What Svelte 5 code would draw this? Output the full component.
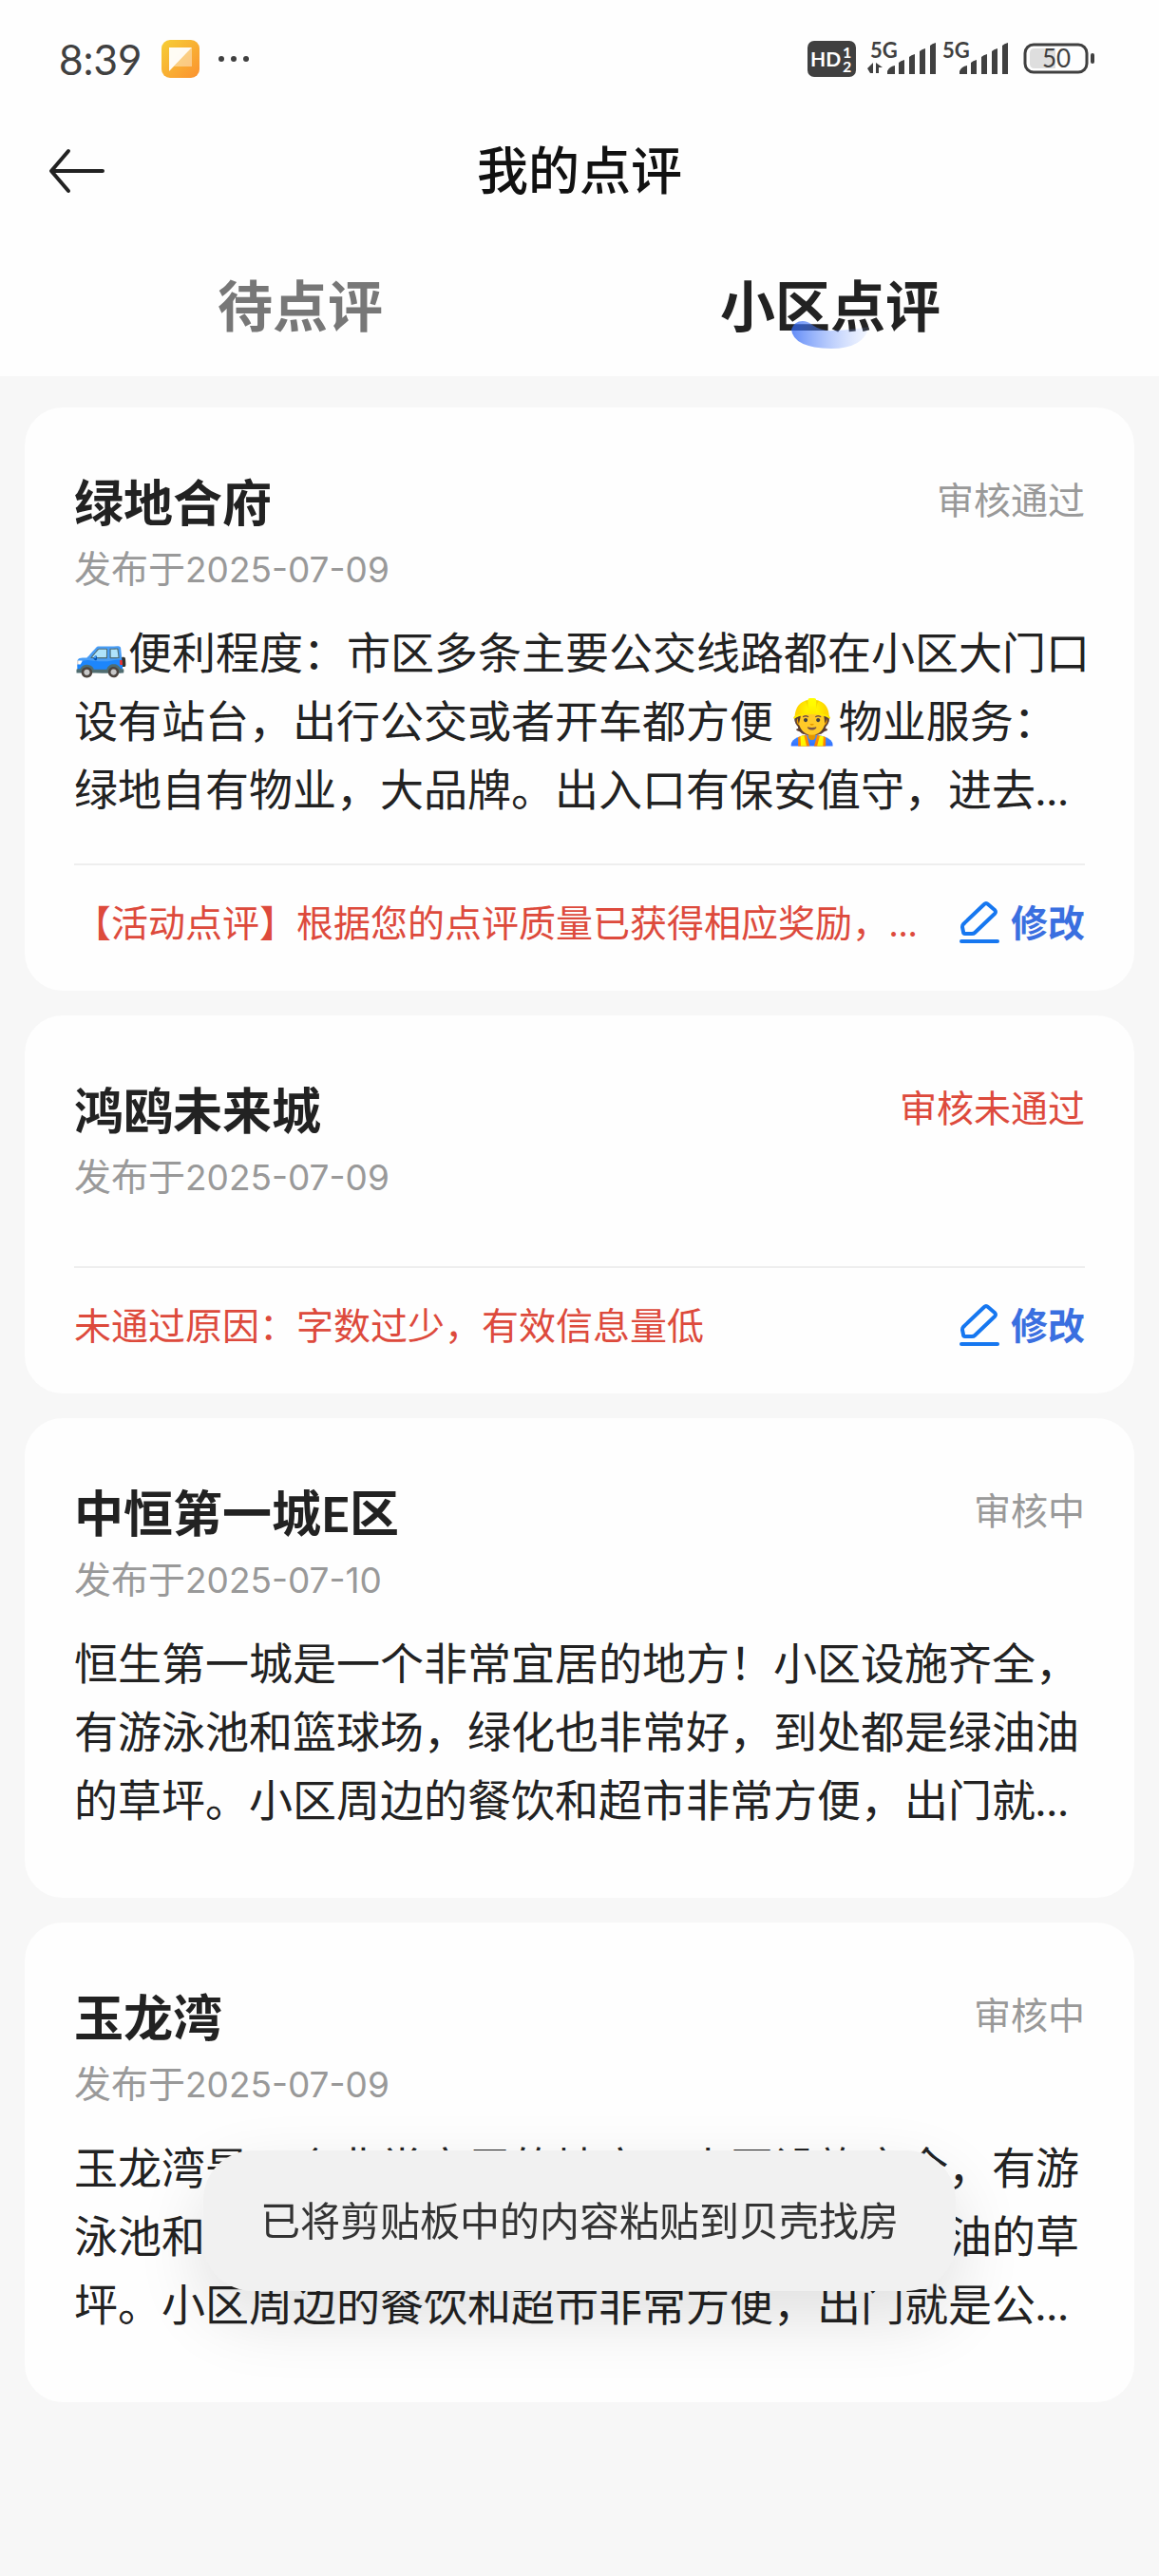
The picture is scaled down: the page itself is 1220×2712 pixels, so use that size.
<script>
  let activeTab = "community";

  const tabs = [
    { id: "pending", label: "待点评" },
    { id: "community", label: "小区点评" }
  ];

  const reviews = [
    {
      name: "绿地合府",
      date: "2025-07-09",
      status: "审核通过",
      text:
        "🚙便利程度：市区多条主要公交线路都在小区大门口\n设有站台，出行公交或者开车都方便 👷物业服务：\n绿地自有物业，大品牌。出入口有保安值守，进去…",
      note: "【活动点评】根据您的点评质量已获得相应奖励，…"
    },
    {
      name: "鸿鸥未来城",
      date: "2025-07-09",
      status: "审核未通过",
      rejected: true,
      text: "",
      note: "未通过原因：字数过少，有效信息量低"
    },
    {
      name: "中恒第一城E区",
      date: "2025-07-10",
      status: "审核中",
      text:
        "恒生第一城是一个非常宜居的地方！小区设施齐全，\n有游泳池和篮球场，绿化也非常好，到处都是绿油油\n的草坪。小区周边的餐饮和超市非常方便，出门就…"
    },
    {
      name: "玉龙湾",
      date: "2025-07-09",
      status: "审核中",
      text:
        "玉龙湾是一个非常宜居的地方，小区设施齐全，有游\n泳池和篮球场，绿化也非常好，到处都是绿油油的草\n坪。小区周边的餐饮和超市非常方便，出门就是公…"
    }
  ];
</script>

<style>
  :global(body) {
    background: #f7f7f7;
  }
  .page {
    font-family: Lato, "Noto Sans CJK SC", sans-serif;
    color: #222;
    min-height: 100vh;
  }
  button {
    font-family: inherit;
    border: 0;
    padding: 0;
    background: none;
    cursor: pointer;
  }
  svg {
    display: block;
  }
  header {
    background: #fefefe;
  }
  .statusbar {
    display: flex;
    justify-content: space-between;
    align-items: center;
    height: 124px;
    padding: 0 67px 0 62px;
    color: #404040;
  }
  .statusbar div {
    display: flex;
    align-items: center;
  }
  .left {
    gap: 20px;
  }
  .right {
    gap: 12px;
  }
  .time {
    font-size: 44px;
    line-height: 60px;
  }
  .navbar {
    display: grid;
    grid-template-columns: 120px 1fr 120px;
    align-items: center;
    height: 112px;
  }
  .back {
    padding-left: 50px;
  }
  h1 {
    margin: 0;
    color: #111;
    font-size: 54px;
    line-height: 72px;
    font-weight: 500;
    text-align: center;
  }
  .tabs {
    display: grid;
    grid-template-columns: 1fr 1fr;
    height: 160px;
    padding: 0 67px 0 37px;
  }
  .tab {
    position: relative;
    color: #777;
    font-size: 58px;
    line-height: 80px;
    font-weight: 700;
    padding-top: 12px;
  }
  .tab.active {
    color: #222;
  }
  .tab svg {
    position: absolute;
    left: 50%;
    top: 50%;
    transform: translate(-50%, 22px);
  }
  main {
    display: flex;
    flex-direction: column;
    gap: 26px;
    padding: 33px 26px;
  }
  .card {
    background: #fefefe;
    border-radius: 40px;
    padding: 70px 52px 0;
  }
  .head {
    display: flex;
    justify-content: space-between;
    align-items: flex-start;
  }
  h2 {
    margin: 0;
    font-size: 52px;
    line-height: 60px;
    font-weight: 700;
  }
  .state,
  .date,
  .note,
  .edit {
    font-size: 39px;
    line-height: 54px;
  }
  .state,
  .date {
    color: #999;
  }
  .date {
    margin: 12px 0 0;
  }
  .date time {
    font-family: Inter, sans-serif;
    font-size: 37px;
    line-height: 1;
  }
  .text {
    margin: 26px 0 0;
    padding-bottom: 67px;
    font-size: 46px;
    line-height: 72px;
    white-space: pre;
  }
  .has-foot .text {
    padding-bottom: 42px;
  }
  .foot {
    display: flex;
    justify-content: space-between;
    align-items: center;
    border-top: 2px solid #eee;
    padding: 33px 0 45px;
  }
  .note {
    margin: 0;
  }
  .note,
  .state.rejected {
    color: #dd4a3c;
  }
  .edit {
    display: flex;
    align-items: center;
    gap: 12px;
    color: #3a6fe0;
    font-weight: 700;
  }
  .toast {
    position: fixed;
    left: 50%;
    bottom: 300px;
    transform: translateX(-50%);
    padding: 44px 60px;
    border-radius: 52px;
    background: #f1f1f1;
    box-shadow: 0 28px 72px rgba(0, 0, 0, 0.12);
    color: #333;
    font-size: 42px;
    line-height: 60px;
    white-space: nowrap;
  }
</style>

<div class="page">
  <header>
    <div class="statusbar">
      <div class="left">
        <span class="time">8:39</span>
        <svg width="40" height="40" viewBox="0 0 40 40">
          <defs>
            <linearGradient id="note-bg" x1="0" y1="0" x2="1" y2="1">
              <stop offset="0" stop-color="#f6cf36" />
              <stop offset="1" stop-color="#fb9130" />
            </linearGradient>
          </defs>
          <rect width="40" height="40" rx="9" fill="url(#note-bg)" />
          <path d="M32 8v20H13z" fill="#fff" opacity="0.4" />
          <path d="M8 8h24L8 33z" fill="#fff" opacity="0.95" />
        </svg>
        <svg width="32" height="8" viewBox="0 0 32 8" fill="#404040">
          <circle cx="3" cy="4" r="3" />
          <circle cx="16" cy="4" r="3" />
          <circle cx="29" cy="4" r="3" />
        </svg>
      </div>
      <div class="right">
        <svg width="51" height="38" viewBox="0 0 51 38" font-weight="700" fill="#fff">
          <rect width="51" height="38" rx="7" fill="#404040" />
          <text x="3" y="27" font-size="21">HD</text>
          <text x="37" y="18" font-size="16">1</text>
          <text x="37" y="33" font-size="16">2</text>
        </svg>
        <svg width="152" height="50" viewBox="0 -6 152 50" font-weight="700" fill="#404040">
          <text x="3" y="18" font-size="22">5G</text>
          <path d="M0 29l6-6v11H3zM9 23v11h3v-6h4z" />
          <path id="bars" d="M21 35v-3q2-5 8-6v9zM33 35V23q2-2 6-3v15zM44 35V17q2-2 6-3v21zM55 35V11q2-2 6-3v27zM66 35V5q2-2 6-3v33z" />
          <text x="79" y="18" font-size="22">5G</text>
          <use href="#bars" x="76" />
        </svg>
        <svg width="76" height="34" viewBox="0 0 76 34">
          <rect x="2" y="2" width="65" height="29" rx="9" fill="none" stroke="#404040" stroke-width="3" />
          <path d="M12 6h22v21H12q-5 0-5-5V11q0-5 5-5z" fill="#dedede" />
          <rect x="71" y="11" width="4" height="11" rx="2" fill="#404040" />
          <text x="35" y="26" font-size="26" text-anchor="middle" fill="#404040">50</text>
        </svg>
      </div>
    </div>
    <div class="navbar">
      <button class="back" aria-label="返回">
        <svg width="62" height="50" viewBox="0 0 62 50" fill="none" stroke="#222" stroke-width="4" stroke-linecap="round" stroke-linejoin="round">
          <path d="M22 4L4 25l18 21M5 25h53" />
        </svg>
      </button>
      <h1>我的点评</h1>
    </div>
    <div class="tabs">
      {#each tabs as tab}
        <button class="tab" class:active={activeTab == tab.id} on:click={() => (activeTab = tab.id)}>
          {tab.label}
          {#if activeTab == tab.id}
            <svg width="82" height="30" viewBox="0 0 82 30">
              <defs>
                <linearGradient id="smile">
                  <stop offset="0" stop-color="#2f66f5" stop-opacity="0.75" />
                  <stop offset="1" stop-color="#8fb0ff" stop-opacity="0.1" />
                </linearGradient>
              </defs>
              <path d="M0 9Q3 0 12 0Q17 0 22 4Q32 11 44 10Q66 9 82 6Q76 29 42 29Q2 28 0 9z" fill="url(#smile)" />
            </svg>
          {/if}
        </button>
      {/each}
    </div>
  </header>

  <main>
    {#each reviews as review}
      <article class="card" class:has-foot={review.note}>
        <div class="head">
          <h2>{review.name}</h2>
          <span class="state" class:rejected={review.rejected}>{review.status}</span>
        </div>
        <p class="date">发布于<time>{review.date}</time></p>
        <p class="text">{review.text}</p>
        {#if review.note}
          <div class="foot">
            <p class="note">{review.note}</p>
            <button class="edit">
              <svg width="42" height="46" viewBox="0 0 42 46" fill="none" stroke="#1677f0" stroke-width="4" stroke-linecap="round" stroke-linejoin="round">
                <path d="M26 4q2-2 4 0l7 6q2 2 0 4L16 34q-1 1-3 1H6q-2 0-2-2l-1-5q0-2 1-3z" />
                <path d="M2 43h38" />
              </svg>
              修改
            </button>
          </div>
        {/if}
      </article>
    {/each}
  </main>

  <div class="toast" role="status">已将剪贴板中的内容粘贴到贝壳找房</div>
</div>
